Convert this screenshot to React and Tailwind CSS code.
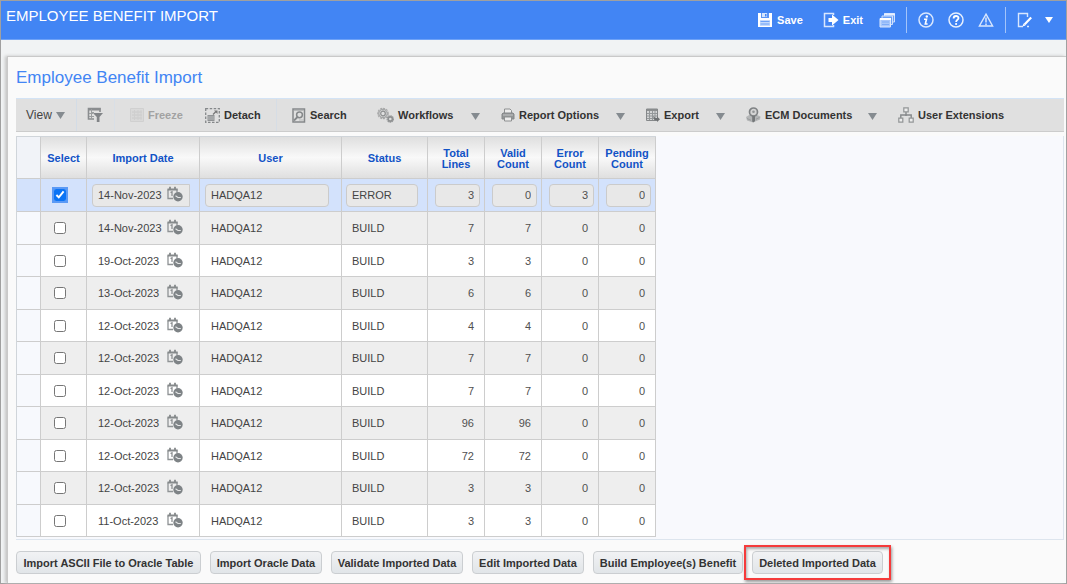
import React from "react";

const rows = [
  { date: "14-Nov-2023", status: "ERROR", counts: [3, 0, 3, 0] },
  { date: "14-Nov-2023", status: "BUILD", counts: [7, 7, 0, 0] },
  { date: "19-Oct-2023", status: "BUILD", counts: [3, 3, 0, 0] },
  { date: "13-Oct-2023", status: "BUILD", counts: [6, 6, 0, 0] },
  { date: "12-Oct-2023", status: "BUILD", counts: [4, 4, 0, 0] },
  { date: "12-Oct-2023", status: "BUILD", counts: [7, 7, 0, 0] },
  { date: "12-Oct-2023", status: "BUILD", counts: [7, 7, 0, 0] },
  { date: "12-Oct-2023", status: "BUILD", counts: [96, 96, 0, 0] },
  { date: "12-Oct-2023", status: "BUILD", counts: [72, 72, 0, 0] },
  { date: "12-Oct-2023", status: "BUILD", counts: [3, 3, 0, 0] },
  { date: "11-Oct-2023", status: "BUILD", counts: [3, 3, 0, 0] },
];

const countNames = ["Total Lines", "Valid Count", "Error Count", "Pending Count"];

const actions = [
  { label: "Import ASCII File to Oracle Table", width: "w-[185px]" },
  { label: "Import Oracle Data", width: "w-[112px]" },
  { label: "Validate Imported Data", width: "w-[132px]" },
  { label: "Edit Imported Data", width: "w-[112px]" },
  { label: "Build Employee(s) Benefit", width: "w-[150px]" },
  { label: "Deleted Imported Data", width: "w-[131px]", marked: true },
];

function Svg({ w = 16, h = 16, children, className = "" }) {
  return (
    <svg
      width={w}
      height={h}
      viewBox={`0 0 ${w} ${h}`}
      fill="none"
      aria-hidden="true"
      className={`shrink-0 ${className}`}
    >
      {children}
    </svg>
  );
}

const Caret = () => (
  <Svg w={9} h={7} className="text-[#858b90]">
    <path d="M0 0H9L4.5 7Z" fill="currentColor" />
  </Svg>
);

const SaveIcon = () => (
  <Svg>
    <path d="M1 1H15V15H1Z" fill="#fff" />
    <path d="M4 1H12V6H4Z" fill="#5b95f6" />
    <path d="M5 1H10V5H5Z" fill="#d6e5fd" />
    <path d="M8 2H9.500V4.500H8Z" fill="#4285f4" />
    <path d="M3 8H13V14H3Z" fill="#c5dafc" />
    <path d="M3.500 9.500H12.500M3.500 12H12.500" stroke="#6ba0f7" />
  </Svg>
);

const ExitIcon = () => (
  <Svg>
    <path d="M10.500 3V1.500H1.500V14.500H10.500V13" stroke="#d9e7fe" strokeWidth="1.500" />
    <path d="M5.500 6H9V2.500L15.500 8L9 13.500V10H5.500Z" fill="#fff" />
  </Svg>
);

const WindowsIcon = () => (
  <Svg>
    <path d="M5.500 1.500H15.500V10H5.500Z" fill="#6aa0f7" stroke="#cfe0fd" />
    <path d="M5 2.500H16" stroke="#e8f0fe" strokeWidth="2" />
    <path d="M3 4H13.500V12.500H3Z" fill="#6aa0f7" stroke="#cfe0fd" />
    <path d="M1 6.500H11.500V15H1Z" fill="#a9c8fb" stroke="#dce9fe" />
    <path d="M1 7H12" stroke="#fff" strokeWidth="2" />
    <path d="M3 10H10M3 12.500H10" stroke="#7eadf8" />
  </Svg>
);

const InfoIcon = () => (
  <Svg>
    <circle cx="8" cy="8" r="7" stroke="#d9e7fe" strokeWidth="1.500" />
    <circle cx="8.800" cy="4.500" r="1.200" fill="#fff" />
    <path d="M6 7.200H8.500L7.300 12H9.600" stroke="#fff" strokeWidth="1.600" />
  </Svg>
);

const HelpIcon = () => (
  <Svg>
    <circle cx="8" cy="8" r="7" stroke="#e6effe" strokeWidth="1.500" />
    <path d="M5.600 6.400C5.600 3.200 10.500 3.300 10.500 6.100C10.500 7.800 8.100 7.800 8.100 10" stroke="#fff" strokeWidth="1.800" />
    <circle cx="8.100" cy="12" r="1.100" fill="#fff" />
  </Svg>
);

const AlertIcon = () => (
  <Svg>
    <path d="M8 2.200L14.600 14H1.400Z" stroke="#d9e7fe" strokeWidth="1.400" />
    <path d="M8 5.500V10.500M8 11.500V13.200" stroke="#d9e7fe" strokeWidth="1.500" />
  </Svg>
);

const NoteIcon = () => (
  <Svg>
    <path d="M10.500 5V1.500H1.500V14.500H6M10 14.500H12" stroke="#d9e7fe" strokeWidth="1.400" />
    <path d="M14.200 5.500L7.500 12.500" stroke="#fff" strokeWidth="2.200" />
    <path d="M6.500 11.500L8.500 13.500L5.500 14.500Z" fill="#fff" />
  </Svg>
);

const FilterIcon = () => (
  <Svg>
    <path d="M1 1H13.500V3.500H1Z" fill="#8a8d8f" />
    <path d="M13 5V1.500H1.500V12H7" stroke="#8a8d8f" strokeWidth="1.600" />
    <path d="M4.500 2V12M5 5.500H7M2 6.500H6M2 9.500H7" stroke="#9b9e9f" />
    <path d="M6 6H16L12.500 10V15H9.800V10Z" fill="#818487" />
  </Svg>
);

const FreezeIcon = () => (
  <Svg w={14} h={14}>
    <path d="M.5 .5H13.500V13.500H.5Z" fill="#d9d9d9" stroke="#d0d0d0" />
    <path d="M2 4H12M2 7H12M2 10H12" stroke="#cacaca" />
    <path d="M4.500 2V12M8 2V12M11 2V12" stroke="#cfcfcf" />
  </Svg>
);

const DetachIcon = () => (
  <Svg w={15} h={15}>
    <path d="M.7 .7H14.300V14.300H.7Z" stroke="#85888a" strokeWidth="1.300" strokeDasharray="2.500 1.500" />
    <path d="M2.500 7H9.500V13H2.500Z" fill="#909395" />
    <path d="M3 9H9M3 11H9" stroke="#b9bbbc" />
    <path d="M8 6.500L11 3.500" stroke="#777" strokeWidth="1.300" />
    <path d="M9 2.500H12.500V6Z" fill="#777" />
  </Svg>
);

const SearchIcon = () => (
  <Svg w={14} h={15}>
    <path d="M1 1H12.500V14H1Z" stroke="#85888a" strokeWidth="1.500" />
    <path d="M2 2.500H12" stroke="#b7b9ba" />
    <circle cx="7.500" cy="6.800" r="2.900" stroke="#85888a" strokeWidth="1.500" />
    <path d="M5.500 9L2 12.500" stroke="#85888a" strokeWidth="1.800" />
    <path d="M7 12H12" stroke="#b7b9ba" />
  </Svg>
);

const GearsIcon = () => (
  <Svg w={17} h={16}>
    <circle cx="6" cy="6.500" r="5.200" stroke="#aaa" strokeWidth="1.200" strokeDasharray="2 1" />
    <circle cx="6" cy="6.500" r="4.300" fill="#cfcfcf" stroke="#999b9c" />
    <circle cx="6" cy="6.500" r="2.300" fill="#e0e0e0" stroke="#8e9091" strokeWidth="1.200" />
    <circle cx="13.300" cy="12" r="3.200" stroke="#999b9c" strokeWidth="1.200" strokeDasharray="1.500 .6" />
    <circle cx="13.300" cy="12" r="2.100" fill="#ddd" stroke="#8e9091" strokeWidth="1.600" />
  </Svg>
);

const PrintIcon = () => (
  <Svg w={14} h={14}>
    <path d="M3.500 6V1H9L10.500 2.500V6" fill="#ececec" stroke="#8e9091" />
    <path d="M1 6L2 5H12L13 6V11H1Z" fill="#929596" stroke="#85888a" />
    <path d="M2 7H12" stroke="#c4c5c6" />
    <path d="M3.500 9H10.500V13H3.500Z" fill="#ececec" stroke="#8e9091" />
  </Svg>
);

const ExportIcon = () => (
  <Svg w={14} h={14}>
    <path d="M.5 1H11.500V12.500H.5Z" fill="#d4d5d6" stroke="#85888a" />
    <path d="M1 2H11" stroke="#85888a" strokeWidth="1.800" />
    <path d="M1 5.500H11M1 8H11M1 10.500H11M3.500 3V12M6.500 3V12M9 3V12" stroke="#94989a" />
    <path d="M7 8L9.500 10H11V8.500L14 11.200L11 14V12.300H8.500Z" fill="#6e7173" />
  </Svg>
);

const EcmIcon = () => (
  <Svg w={15} h={16}>
    <path d="M0 10L4 7.500L7 9V15.500L1 13.500ZM14.500 9.500L10 7.500L8 9V15L14 12.500Z" fill="#b4b6b7" />
    <circle cx="7.500" cy="5" r="4" fill="#d4d4d4" stroke="#7f8284" strokeWidth="1.700" />
    <circle cx="7.500" cy="4.800" r="1.300" fill="#929596" />
    <path d="M6.200 8.800H9V14L7.500 15.500L6.200 14.500Z" fill="#75787a" />
    <path d="M1 11.500L5 13.300M13.500 10.500L10 12.200" stroke="#9a9c9d" />
  </Svg>
);

const TreeIcon = () => (
  <Svg w={16} h={16}>
    <path d="M8 5V8M2.800 11V8H13.200V11M8 8V9" stroke="#85888a" strokeWidth="1.400" />
    <path d="M5.800 .8H10.200V4.800H5.800ZM.8 11.200H4.800V15.200H.8ZM11.200 11.200H15.200V15.200H11.200Z" fill="#ededed" stroke="#929596" strokeWidth="1.200" />
  </Svg>
);

const CalendarIcon = () => (
  <Svg w={16} h={16} className="mb-0.5">
    <path d="M6 12.500H1V3.500M10 3.500V6" stroke="#8f9395" strokeWidth="1.300" />
    <path d="M.5 3.500H10.700" stroke="#85898b" strokeWidth="2" />
    <path d="M3 .8V3.500M8 .8V3.500" stroke="#85898b" strokeWidth="1.800" />
    <path d="M3.500 6.500L5 5.800V10" stroke="#85898b" strokeWidth="1.200" />
    <circle cx="11" cy="10.800" r="4.700" fill="#7e8386" />
    <path d="M8.500 9.800L11 11.500H13.800" stroke="#e4e5e6" strokeWidth="1.200" />
  </Svg>
);

function ToolItem({ icon, label, width, menu, disabled }) {
  return (
    <button
      type="button"
      disabled={disabled}
      className={`flex h-full shrink-0 items-center gap-1 font-bold whitespace-nowrap ${width} ${
        disabled ? "text-[#a2a2a2]" : "text-[#333]"
      }`}
    >
      {icon}
      <span>{label}</span>
      {menu && (
        <span className="ml-auto pt-0.5 pr-[21px]">
          <Caret />
        </span>
      )}
    </button>
  );
}

function HeaderButton({ label, name, children, className = "" }) {
  return (
    <button type="button" aria-label={name} className={`flex shrink-0 items-center gap-1 font-bold ${className}`}>
      {children}
      {label}
    </button>
  );
}

const cell = "border-r border-b border-[#cdcdcd] p-0";
const head =
  "border-r border-b border-[#cdcdcd] bg-linear-to-b from-[#dfdfdf] via-[#f9f9f9] to-[#dfdfdf] px-0 pt-0.5 pb-0 font-bold leading-[11px] text-[#1253c6]";
const field = "h-[23px] border border-[#cbcbcb] bg-[#e8e8e8] outline-none";

function Row({ row, index }) {
  const selected = index === 0;
  const tone = selected
    ? "h-[33px] bg-[#d3e2fc]"
    : index % 2
      ? "h-[33px] bg-[#eeeeee]"
      : "h-8 bg-white";
  return (
    <tr className={tone}>
      <td className={`${cell} ${selected ? "" : "bg-[#f7f9fd]"}`} />
      <td className={cell}>
        <div className={`ml-[11px] flex size-4 items-center justify-center ${selected ? "bg-[#5b9af5]" : ""}`}>
          <input
            type="checkbox"
            defaultChecked={selected}
            aria-label={`Select row ${index + 1}`}
            className="size-3 accent-[#0b74f5]"
          />
        </div>
      </td>
      <td className={cell}>
        {selected ? (
          <div className={`ml-[5px] flex w-[98px] items-center rounded-l-[4px] pl-[5px] ${field}`}>
            <input readOnly aria-label="Import Date" defaultValue={row.date} className="w-[69px] outline-none" />
            <CalendarIcon />
          </div>
        ) : (
          <div className="flex items-center pl-[11px]">
            <span className="w-[69px]">{row.date}</span>
            <CalendarIcon />
          </div>
        )}
      </td>
      <td className={cell}>
        {selected ? (
          <input readOnly aria-label="User" defaultValue="HADQA12" className={`ml-[5px] w-[124px] rounded-[4px] px-[5px] ${field}`} />
        ) : (
          <span className="pl-[11px]">HADQA12</span>
        )}
      </td>
      <td className={cell}>
        {selected ? (
          <input readOnly aria-label="Status" defaultValue={row.status} className={`ml-1 w-[72px] rounded-[4px] px-[5px] ${field}`} />
        ) : (
          <span className="pl-2.5">{row.status}</span>
        )}
      </td>
      {row.counts.map((n, i) => (
        <td key={i} className={`${cell} text-right text-[#505050] ${selected ? "pr-1" : "pr-2.5"}`}>
          {selected ? (
            <input
              readOnly
              aria-label={countNames[i]}
              defaultValue={n}
              className={`w-[45px] rounded-[4px] px-[5px] text-right ${field}`}
            />
          ) : (
            n
          )}
        </td>
      ))}
    </tr>
  );
}

export default function App() {
  return (
    <div className="flex min-h-screen flex-col border border-[#a0a0a0] bg-[#f1f3f4] font-['Liberation_Sans',Arial,sans-serif] text-[11px] leading-4 text-[#444]">
      <header className="flex h-[39px] items-center border-b border-[#6ea2f7] bg-[#4285f4] text-white">
        <h1 className="mb-2 pl-[5px] text-[15px] leading-5 whitespace-nowrap">EMPLOYEE BENEFIT IMPORT</h1>
        <div className="ml-auto flex h-[26px] items-center pr-[13px]">
          <HeaderButton label="Save" className="mr-5">
            <SaveIcon />
          </HeaderButton>
          <HeaderButton label="Exit" className="mr-4">
            <ExitIcon />
          </HeaderButton>
          <HeaderButton name="Windows" className="mr-[11px]">
            <WindowsIcon />
          </HeaderButton>
          <div className="flex h-full items-center gap-3.5 border-x border-[#a3c4fa] px-[11px]">
            <HeaderButton name="Information">
              <InfoIcon />
            </HeaderButton>
            <HeaderButton name="Help">
              <HelpIcon />
            </HeaderButton>
            <HeaderButton name="Alerts">
              <AlertIcon />
            </HeaderButton>
          </div>
          <HeaderButton name="Notes" className="ml-[11px] gap-3">
            <NoteIcon />
            <Svg w={8} h={6}>
              <path d="M0 0H8L4 6Z" fill="#fff" />
            </Svg>
          </HeaderButton>
        </div>
      </header>

      <main className="mt-4 ml-1.5 flex-1 border-t border-l border-[#c9c9c9] bg-[#fafafa] pr-0.5 pl-2 shadow-[-2px_0_3px_#c4c4c4]">
        <h2 className="pt-[11px] text-[17px] leading-5 text-[#4285f4]">Employee Benefit Import</h2>

        <div className="mt-2.5 flex h-[34px] items-center overflow-hidden border-t border-b border-t-[#d3e3f5] border-b-[#cccccc] bg-[#e0e0e0]">
          <button type="button" className="flex h-full w-[61px] shrink-0 items-center gap-1 border-r border-[#d3dce6] pl-2.5 text-[12px]">
            View
            <Caret />
          </button>
          <button type="button" aria-label="Query by example" className="flex h-full w-[38px] shrink-0 items-center border-r border-[#d9dfe6] pl-2.5">
            <FilterIcon />
          </button>
          <ToolItem icon={<FreezeIcon />} label="Freeze" width="w-[90px] pl-[15px]" disabled />
          <ToolItem icon={<DetachIcon />} label="Detach" width="w-[72px] border-r border-[#d6dde5]" />
          <ToolItem icon={<SearchIcon />} label="Search" width="w-[100px] pl-[15px]" />
          <ToolItem icon={<GearsIcon />} label="Workflows" width="w-[124px]" menu />
          <ToolItem icon={<PrintIcon />} label="Report Options" width="w-[145px]" menu />
          <ToolItem icon={<ExportIcon />} label="Export" width="w-[100px]" menu />
          <ToolItem icon={<EcmIcon />} label="ECM Documents" width="w-[152px]" menu />
          <ToolItem icon={<TreeIcon />} label="User Extensions" width="w-[120px]" />
        </div>

        <div className="mt-1 border-r border-b border-[#dde5ee] bg-[#f8f9fd] pb-0.5">
          <table className="w-[640px] table-fixed border-separate border-spacing-0 border-t border-l border-[#d0d5da]">
            <colgroup>
              <col className="w-6" />
              <col className="w-[46px]" />
              <col className="w-[113px]" />
              <col className="w-[142px]" />
              <col className="w-[86px]" />
              <col className="w-[57px]" />
              <col className="w-[57px]" />
              <col className="w-[57px]" />
              <col className="w-[57px]" />
            </colgroup>
            <thead>
              <tr className="h-[42px]">
                <td className="border-r border-b border-[#cdcdcd] bg-[#f1f3f8]" />
                <th className={head}>Select</th>
                <th className={head}>Import Date</th>
                <th className={head}>User</th>
                <th className={head}>Status</th>
                {countNames.map((name) => (
                  <th key={name} className={head}>
                    <span className="block">{name.split(" ")[0]}</span>
                    <span className="block">{name.split(" ")[1]}</span>
                  </th>
                ))}
              </tr>
            </thead>
            <tbody>
              {rows.map((row, i) => (
                <Row key={i} row={row} index={i} />
              ))}
            </tbody>
          </table>
        </div>

        <div className="flex gap-[9px] pt-[11px] pb-[9px]">
          {actions.map(({ label, width, marked }) => (
            <div key={label} className="relative shrink-0">
              <button
                type="button"
                className={`h-[23px] rounded-[4px] border border-[#cbced1] bg-linear-to-b from-[#f1f2f4] to-[#e1e5e8] font-bold whitespace-nowrap text-[#333] ${width}`}
              >
                {label}
              </button>
              {marked && (
                <span className="pointer-events-none absolute -inset-x-2 -inset-y-1.5 border-2 border-[#f53b3b] shadow-[1px_2px_3px_#999,inset_1px_2px_3px_#aaa]" />
              )}
            </div>
          ))}
        </div>
      </main>
    </div>
  );
}
